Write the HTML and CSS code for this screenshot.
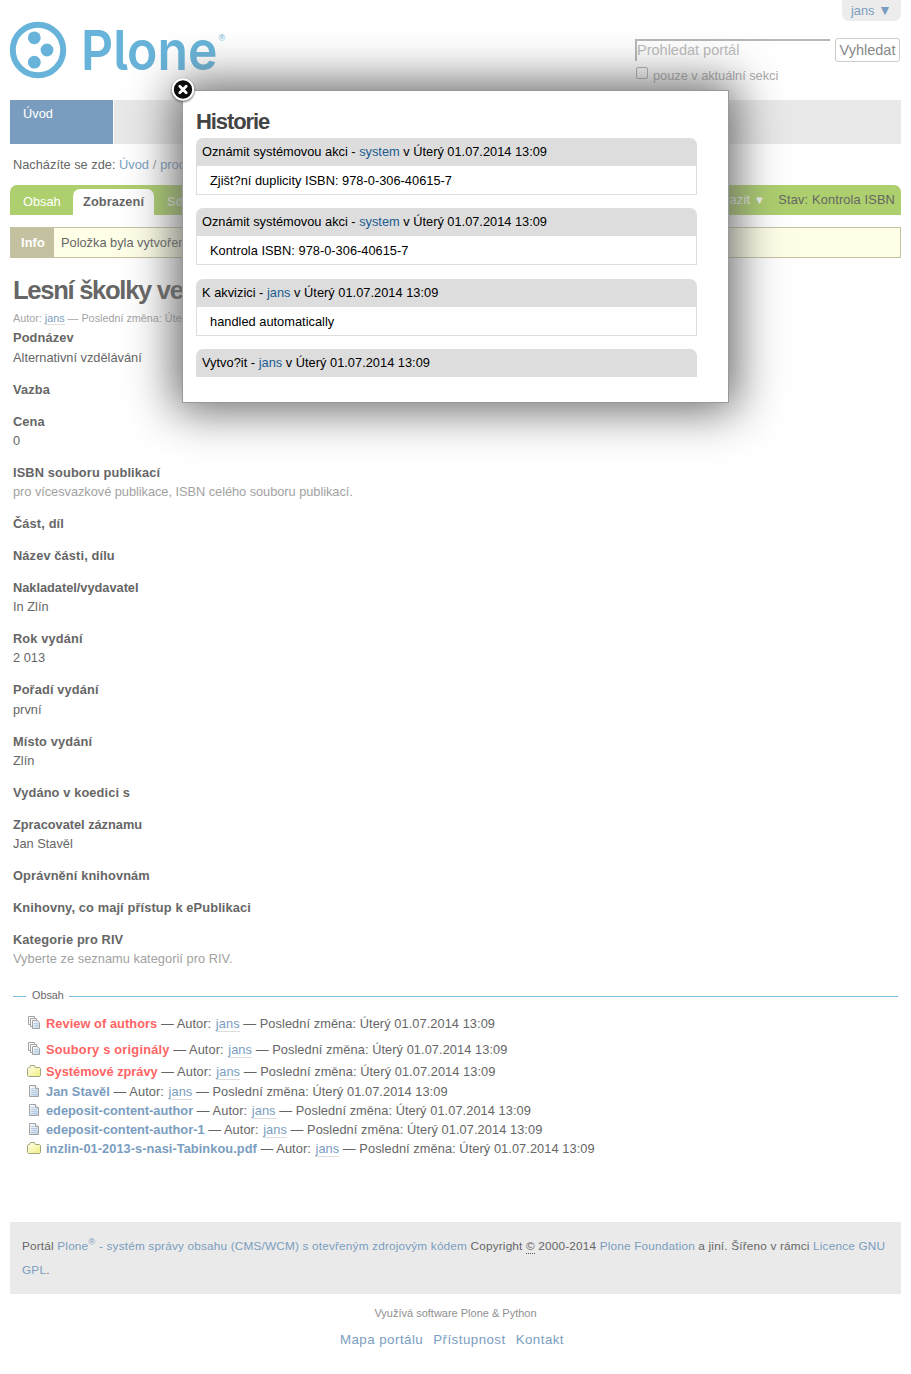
FILE: index.html
```
<!DOCTYPE html>
<html lang="cs">
<head>
<meta charset="utf-8">
<title>Plone</title>
<link rel="stylesheet" href="styles.css">
</head>
<body>
<svg class="defs" width="0" height="0">
  <defs>
    <linearGradient id="paper" x1="0" y1="0" x2="1" y2="1"><stop offset="0" stop-color="#fff"/><stop offset="1" stop-color="#b5d2ee"/></linearGradient>
    <linearGradient id="yellow" x1="0" y1="0" x2="1" y2="1"><stop offset="0" stop-color="#fffff0"/><stop offset="1" stop-color="#f0ef7e"/></linearGradient>
    <symbol id="doc" viewBox="0 0 16 16"><path d="M3.500 2.500H9.500L12.500 5.500V13.500H3.500Z" fill="url(#paper)" stroke="#a2a2a2"/><path d="M9.500 2.500V5.500H12.500" fill="#fff" stroke="#a2a2a2"/><path d="M5 5.500h3M5 7.500h6M5 9.500h6M5 11.500h6" stroke="#bccbdc"/></symbol>
    <symbol id="stack" viewBox="0 0 16 16"><path d="M4 9.500H2.500V1.500H8.500V3" fill="none" stroke="#a2a2a2"/><path d="M6 11.500H4.500V3.500H10.500V5" fill="none" stroke="#a2a2a2"/><path d="M6.500 5.500H11.500L13.500 7.500V13.500H6.500Z" fill="url(#paper)" stroke="#a2a2a2"/><path d="M8 8.500h4M8 10.500h4" stroke="#bccbdc"/></symbol>
    <symbol id="folder" viewBox="0 0 16 16"><path d="M1.500 5.500L2.500 4.500H3.500L4.500 2.500H8.500L9.500 4.500H13.500L14.500 5.500V12.500L13.500 13.500H2.500L1.500 12.500Z" fill="url(#yellow)" stroke="#a3a37c"/></symbol>
  </defs>
</svg>
<div class="page">
  <header class="header">
    <svg class="logo" width="220" height="60" viewBox="0 0 220 60">
      <circle cx="28" cy="30" r="25.200" fill="none" stroke="#67b3d9" stroke-width="6"/>
      <circle cx="24.300" cy="17.800" r="6.400"/><circle cx="37" cy="30" r="6.400"/><circle cx="24.300" cy="42.200" r="6.400"/>
      <text class="word" x="71" y="49.500" textLength="136.500" lengthAdjust="spacingAndGlyphs">Plone</text>
      <text class="reg" x="208.500" y="21">®</text>
    </svg>
    <div class="tools">
      <div class="user">jans <span>▼</span></div>
      <div class="search"><div class="field">Prohledat portál</div><div class="button">Vyhledat</div></div>
      <div class="section"><span class="check"></span><span>pouze v aktuální sekci</span></div>
    </div>
  </header>
  <nav class="nav"><a>Úvod</a></nav>
  <div class="crumbs">Nacházíte se zde: <a>Úvod</a> <i>/</i> <a>produkce</a></div>
  <div class="tabs">
    <span class="tab">Obsah</span><span class="tab active">Zobrazení</span><span class="tab share">Sdílení</span>
    <span class="actions"><span class="view">Zobrazit <small>▼</small></span><span>Stav: Kontrola ISBN</span></span>
  </div>
  <div class="info"><b>Info</b><span>Položka byla vytvořena</span></div>
  <main class="content">
    <h1>Lesní školky ve</h1>
    <div class="byline">Autor: <a>jans</a> — Poslední změna: Úterý</div>
    <dl>
      <div><dt>Podnázev</dt><dd>Alternativní vzdělávání</dd></div>
      <div><dt>Vazba</dt></div>
      <div><dt>Cena</dt><dd>0</dd></div>
      <div><dt>ISBN souboru publikací</dt><dd class="help">pro vícesvazkové publikace, ISBN celého souboru publikací.</dd></div>
      <div><dt>Část, díl</dt></div>
      <div><dt>Název části, dílu</dt></div>
      <div><dt class="tight">Nakladatel/vydavatel</dt><dd>In Zlín</dd></div>
      <div><dt>Rok vydání</dt><dd>2 013</dd></div>
      <div><dt>Pořadí vydání</dt><dd>první</dd></div>
      <div><dt>Místo vydání</dt><dd>Zlín</dd></div>
      <div><dt>Vydáno v koedici s</dt></div>
      <div><dt class="tight">Zpracovatel záznamu</dt><dd>Jan Stavěl</dd></div>
      <div><dt>Oprávnění knihovnám</dt></div>
      <div><dt>Knihovny, co mají přístup k ePublikaci</dt></div>
      <div><dt>Kategorie pro RIV</dt><dd class="help last">Vyberte ze seznamu kategorií pro RIV.</dd></div>
    </dl>
    <div class="legend">Obsah</div>
    <ul>
      <li class="first"><svg><use href="#stack"/></svg><b class="red">Review of authors</b> — Autor: <a>jans</a> — Poslední změna: Úterý 01.07.2014 13:09</li>
      <li class="second"><svg><use href="#stack"/></svg><b class="red">Soubory s originály</b> — Autor: <a>jans</a> — Poslední změna: Úterý 01.07.2014 13:09</li>
      <li class="third"><svg><use href="#folder"/></svg><b class="red">Systémové zprávy</b> — Autor: <a>jans</a> — Poslední změna: Úterý 01.07.2014 13:09</li>
      <li><svg><use href="#doc"/></svg><b>Jan Stavěl</b> — Autor: <a>jans</a> — Poslední změna: Úterý 01.07.2014 13:09</li>
      <li><svg><use href="#doc"/></svg><b class="dashed">edeposit-content-author</b> — Autor: <a>jans</a> — Poslední změna: Úterý 01.07.2014 13:09</li>
      <li><svg><use href="#doc"/></svg><b class="dashed">edeposit-content-author-1</b> — Autor: <a>jans</a> — Poslední změna: Úterý 01.07.2014 13:09</li>
      <li><svg><use href="#folder"/></svg><b>inzlin-01-2013-s-nasi-Tabinkou.pdf</b> — Autor: <a>jans</a> — Poslední změna: Úterý 01.07.2014 13:09</li>
    </ul>
  </main>
  <footer>
    <div class="copyright">Portál <a>Plone<sup>®</sup> - systém správy obsahu (CMS/WCM) s otevřeným zdrojovým kódem</a> Copyright <abbr>©</abbr> 2000-2014 <a>Plone Foundation</a> a jiní. Šířeno v rámci <a>Licence GNU<br>GPL</a>.</div>
    <div class="colophon">Využívá software Plone &amp; Python</div>
    <div class="links"><a>Mapa portálu</a><a>Přístupnost</a><a>Kontakt</a></div>
  </footer>
</div>
<section class="overlay">
  <svg class="close" width="30" height="30" viewBox="0 0 30 30"><circle cx="15" cy="14.500" r="10.200" fill="#0c0c0c" stroke="#fff" stroke-width="2"/><path d="M11.800 11.300l6.400 6.400M18.200 11.300l-6.400 6.400" stroke="#fff" stroke-width="2.800" stroke-linecap="round"/></svg>
  <h2>Historie</h2>
  <div class="entry"><div class="head">Oznámit systémovou akci - <a>system</a> v Úterý 01.07.2014 13:09</div><div class="note">Zjišt?ní duplicity ISBN: 978-0-306-40615-7</div></div>
  <div class="entry"><div class="head">Oznámit systémovou akci - <a>system</a> v Úterý 01.07.2014 13:09</div><div class="note">Kontrola ISBN: 978-0-306-40615-7</div></div>
  <div class="entry"><div class="head loose">K akvizici - <a>jans</a> v Úterý 01.07.2014 13:09</div><div class="note">handled automatically</div></div>
  <div class="entry"><div class="head loose">Vytvo?it - <a>jans</a> v Úterý 01.07.2014 13:09</div></div>
</section>
</body>
</html>
```
FILE: styles.css
```
* { box-sizing: border-box; }
body { margin: 0; background: #fff; color: #666; font: 12.8px/19.2px "Liberation Sans", Arial, sans-serif; height: 1374px; overflow: hidden; position: relative; white-space: nowrap; }
.defs { position: absolute; }
a { color: #7a9dbf; text-decoration: none; }
.page { padding: 0 10px; }
.header { height: 100px; display: flex; justify-content: space-between; }
.logo { margin-top: 20px; fill: #67b3d9; overflow: visible; }
.word { font: 600 55px Inter, Roboto, sans-serif; font-feature-settings: "cv05", "ss02"; }
.reg { font: 9px "Liberation Sans", sans-serif; }
.tools { width: 266px; display: flex; flex-direction: column; }
.user { align-self: flex-end; width: 59px; height: 21px; line-height: 21px; padding-left: 9px; background: #ececec; color: #7a9dbf; border-radius: 0 0 7px 7px; }
.user span { font-size: 14px; }
.search { display: flex; gap: 5px; margin-top: 17px; font-size: 14.500px; }
.field { width: 195px; height: 22px; margin-top: 1px; border-top: 2px solid #b7b7b7; border-left: 2px solid #b7b7b7; color: #bbb; line-height: 18px; }
.button { width: 65px; height: 24px; border: 1px solid #cfcbc7; border-radius: 3px; line-height: 22px; text-align: center; color: #888; }
.section { display: flex; gap: 5px; color: #aaa; margin-top: 4px; padding-left: 1px; letter-spacing: -.03px; }
.check { width: 12px; height: 12px; border: 1px solid #b3afab; border-radius: 2px; margin-top: 1px; }
.nav { height: 44px; background: #e9e9e9; display: flex; }
.nav a { width: 104px; background: #7a9dbf; color: #fff; padding: 4px 13px; border-right: 1px solid #fff; }
.crumbs { height: 41px; padding: 11px 3px; }
.crumbs i { font-style: normal; color: #999; margin: 0 .3px; }
.tabs { height: 30px; background: #adcf6d; border-radius: 7px 7px 0 0; display: flex; color: #fff; }
.tab { padding: 7px 0 0 13px; width: 63px; }
.active { width: 81px; margin-top: 4px; padding: 3px 0 0 10px; background: #fff; color: #666; font-weight: bold; border-radius: 7px 7px 0 0; letter-spacing: .07px; }
.share { font-weight: bold; color: #e4eed3; }
.actions { margin-left: auto; display: flex; gap: 13px; padding: 5px 6px 0 0; color: #666; letter-spacing: .15px; }
.view { color: #f4f4f4; }
.view small { font-size: 11.500px; }
.info { margin-top: 12px; height: 31px; border: 1px solid #c3c1a0; background: #ffffe8; display: flex; line-height: 29px; }
.info b { width: 43px; padding-left: 10px; background: #c3c1a0; color: #fff; margin-right: 7px; letter-spacing: .1px; }
.content { padding: 0 3px; }
h1 { margin: 14px 0 0; height: 36px; font-size: 25.600px; line-height: 37px; letter-spacing: -1.300px; }
.byline { height: 20.400px; font-size: 10.800px; color: #a4a4a4; padding-top: 1px; }
.byline a, li a { border-bottom: 1px solid #ddd; }
dl { margin: 0; height: 653.600px; }
dl > div { margin-bottom: 12.800px; }
dt { font-weight: bold; letter-spacing: .13px; }
.tight { letter-spacing: -.02px; }
dd { margin: 0; }
.help { color: #a2a2a2; letter-spacing: -.04px; }
.last { letter-spacing: .04px; }
.legend { display: flex; align-items: center; gap: 5px; font-size: 10.800px; height: 28px; }
.legend::before, .legend::after { content: ""; height: 1px; background: #79bcdc; width: 13px; position: relative; top: .6px; }
.legend::before { margin-right: 1px; }
.legend::after { flex: 1; }
ul { list-style: none; margin: 4px 0 0; padding: 0 0 0 13px; }
li { height: 19.100px; letter-spacing: .07px; }
li a { margin-left: 1px; }
li svg { width: 16px; height: 16px; margin: 0 4px -1px 0; vertical-align: -2px; }
li b { color: #7a9dbf; letter-spacing: .06px; }
li .red { color: #ff6464; }
li .dashed { letter-spacing: 0; }
.first { height: 26px; }
.second { height: 22px; }
.second b { letter-spacing: .22px; }
.third { height: 20px; }
.third b { letter-spacing: 0; }
footer { margin-top: 63.400px; }
.copyright { height: 72px; background: #eaeaea; padding: 12px; font-size: 11.800px; line-height: 24px; letter-spacing: .17px; }
sup { font-size: 9.500px; line-height: 0; }
abbr { border-bottom: 1px dotted #555; }
.colophon { text-align: center; font-size: 11px; color: #8f8f8f; margin-top: 10px; }
.links { display: flex; justify-content: center; gap: 10px; margin: 7px 7px 0 0; font-size: 13.300px; letter-spacing: .47px; }
.overlay { position: absolute; left: 182px; top: 90px; width: 547px; height: 313px; border: 1px solid #999; background: #fff; padding: 17px 31px 0 13px; box-shadow: 0 0 44px 7px #666; color: #000; }
.close { position: absolute; left: -15px; top: -16px; filter: drop-shadow(0 1px 1px #555); }
h2 { margin: 0; height: 30px; font-size: 22px; line-height: 28px; letter-spacing: -1.100px; color: #444; }
.entry { height: 57px; margin-bottom: 13.400px; }
.head { height: 28px; background: #ddd; border-radius: 7px 7px 0 0; padding-left: 6px; line-height: 28px; }
.loose { letter-spacing: .02px; }
.head a { color: #205c90; }
.note { height: 29px; border: 1px solid #ddd; border-top: 0; padding-left: 13px; line-height: 29px; letter-spacing: .02px; }
```
